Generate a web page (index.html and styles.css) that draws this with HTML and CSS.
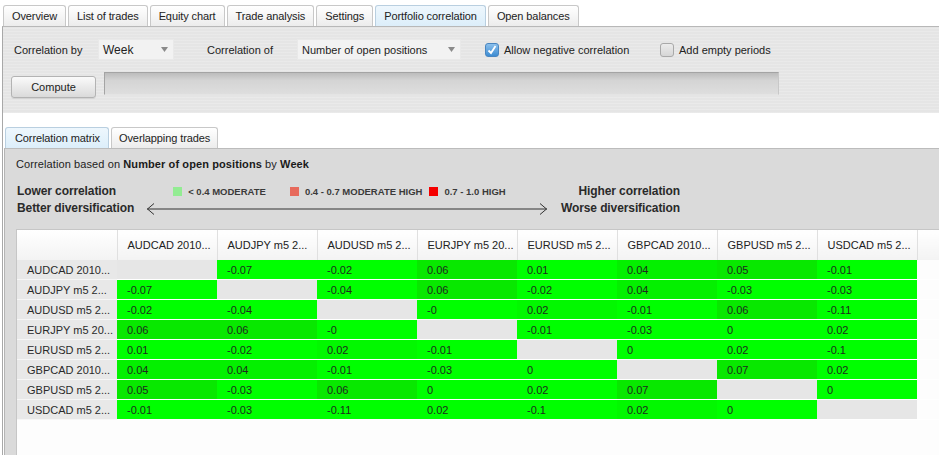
FILE: index.html
```html
<!DOCTYPE html>
<html lang="en">
<head>
  <meta charset="UTF-8">
  <title>Portfolio correlation</title>
  <link rel="stylesheet" href="styles.css">
</head>
<body>
  <div class="tabs">
    <div class="tab">Overview</div>
    <div class="tab">List of trades</div>
    <div class="tab">Equity chart</div>
    <div class="tab">Trade analysis</div>
    <div class="tab">Settings</div>
    <div class="tab active">Portfolio correlation</div>
    <div class="tab">Open balances</div>
  </div>

  <div class="main">
    <div class="settings">
      <div class="row">
        <span class="lbl lbl-by">Correlation by</span>
        <span class="select sel-by">Week <svg class="caret" width="7" height="5" viewBox="0 0 7 5"><path d="M0 0h7L3.5 5z" fill="#8a8a8a"/></svg></span>
        <span class="lbl lbl-of">Correlation of</span>
        <span class="select sel-of">Number of open positions <svg class="caret" width="7" height="5" viewBox="0 0 7 5"><path d="M0 0h7L3.5 5z" fill="#8a8a8a"/></svg></span>
        <span class="check on"><svg width="10" height="10" viewBox="0 0 10 10"><path d="M1.5 5.5l2.5 2.5 4.5-7" fill="none" stroke="#fff" stroke-width="1.8"/></svg></span>
        <span class="lbl lbl-neg">Allow negative correlation</span>
        <span class="check"></span>
        <span class="lbl lbl-empty">Add empty periods</span>
      </div>
      <div class="row row2">
        <button class="btn">Compute</button>
        <div class="progress"></div>
      </div>
    </div>

    <div class="subtabs">
      <div class="tab active sub-first">Correlation matrix</div>
      <div class="tab">Overlapping trades</div>
    </div>

    <div class="sub">
      <div class="caption">Correlation based on <b>Number of open positions</b> by <b>Week</b></div>

      <div class="legend">
        <div class="side">Lower correlation<br>Better diversification</div>
        <div class="mid">
          <div class="keys">
            <span class="key"><i class="sq sq-low"></i>&lt; 0.4 MODERATE</span>
            <span class="key"><i class="sq sq-mid"></i>0.4 - 0.7 MODERATE HIGH</span>
            <span class="key"><i class="sq sq-high"></i>0.7 - 1.0 HIGH</span>
          </div>
          <svg class="arrow" width="402" height="12" viewBox="0 0 402 12">
            <path d="M1 6H401M8 0.5L1.5 6 8 11.5M394 0.5L400.5 6 394 11.5" fill="none" stroke="#333" stroke-width="1"/>
          </svg>
        </div>
        <div class="side right">Higher correlation<br>Worse diversification</div>
      </div>

      <div class="matrix-wrap">
        <table class="matrix">
          <colgroup>
            <col class="c-name"><col><col><col><col><col><col><col><col><col class="c-pad">
          </colgroup>
          <thead>
            <tr>
              <th></th>
              <th>AUDCAD 2010...</th>
              <th>AUDJPY m5 2...</th>
              <th>AUDUSD m5 2...</th>
              <th>EURJPY m5 20...</th>
              <th>EURUSD m5 2...</th>
              <th>GBPCAD 2010...</th>
              <th>GBPUSD m5 2...</th>
              <th>USDCAD m5 2...</th>
              <th></th>
            </tr>
          </thead>
          <tbody>
            <tr>
              <td class="name">AUDCAD 2010...</td>
              <td class="diag"></td><td class="v">-0.07</td><td class="v">-0.02</td><td class="v p2">0.06</td><td class="v">0.01</td><td class="v p1">0.04</td><td class="v p2">0.05</td><td class="v">-0.01</td><td></td>
            </tr>
            <tr>
              <td class="name">AUDJPY m5 2...</td>
              <td class="v">-0.07</td><td class="diag"></td><td class="v">-0.04</td><td class="v p2">0.06</td><td class="v">-0.02</td><td class="v p1">0.04</td><td class="v">-0.03</td><td class="v">-0.03</td><td></td>
            </tr>
            <tr>
              <td class="name">AUDUSD m5 2...</td>
              <td class="v">-0.02</td><td class="v">-0.04</td><td class="diag"></td><td class="v">-0</td><td class="v p0">0.02</td><td class="v">-0.01</td><td class="v p2">0.06</td><td class="v">-0.11</td><td></td>
            </tr>
            <tr>
              <td class="name">EURJPY m5 20...</td>
              <td class="v p2">0.06</td><td class="v p2">0.06</td><td class="v">-0</td><td class="diag"></td><td class="v">-0.01</td><td class="v">-0.03</td><td class="v">0</td><td class="v">0.02</td><td></td>
            </tr>
            <tr>
              <td class="name">EURUSD m5 2...</td>
              <td class="v">0.01</td><td class="v">-0.02</td><td class="v p0">0.02</td><td class="v">-0.01</td><td class="diag"></td><td class="v">0</td><td class="v">0.02</td><td class="v">-0.1</td><td></td>
            </tr>
            <tr>
              <td class="name">GBPCAD 2010...</td>
              <td class="v p1">0.04</td><td class="v p1">0.04</td><td class="v">-0.01</td><td class="v">-0.03</td><td class="v">0</td><td class="diag"></td><td class="v p2">0.07</td><td class="v">0.02</td><td></td>
            </tr>
            <tr>
              <td class="name">GBPUSD m5 2...</td>
              <td class="v p2">0.05</td><td class="v">-0.03</td><td class="v p2">0.06</td><td class="v">0</td><td class="v">0.02</td><td class="v p2">0.07</td><td class="diag"></td><td class="v">0</td><td></td>
            </tr>
            <tr>
              <td class="name">USDCAD m5 2...</td>
              <td class="v">-0.01</td><td class="v">-0.03</td><td class="v">-0.11</td><td class="v">0.02</td><td class="v">-0.1</td><td class="v p0">0.02</td><td class="v">0</td><td class="diag"></td><td></td>
            </tr>
          </tbody>
        </table>
      </div>
    </div>
  </div>
</body>
</html>
```

FILE: styles.css
```css
body {
  margin: 0;
  background: #fff;
  font-family: "Liberation Sans", Arial, sans-serif;
  font-size: 11px;
  color: #222;
  overflow: hidden;
}
.tabs {
  display: flex;
  gap: 2px;
  padding: 5px 0 0 3px;
}
.tab {
  height: 20px;
  line-height: 21px;
  padding: 0 8px;
  border: 1px solid #c8c8c8;
  border-bottom: 0;
  border-radius: 3px 3px 0 0;
  background: linear-gradient(#fff, #ececec);
  color: #222;
  letter-spacing: -0.1px;
}
.tab.active {
  background: linear-gradient(#eef7fd, #dceefa);
  border-color: #b9cfe0;
}
.main {
  margin-left: 2px;
  border-left: 1px solid #a8a8a8;
  border-top: 1px solid #b8b8b8;
}
.settings {
  height: 86px;
  box-sizing: border-box;
  padding: 12px 0 0 8px;
  background: #e5e5e5 repeating-linear-gradient(0deg, rgba(255,255,255,0.18) 0 1px, transparent 1px 3px);
}
.row {
  display: flex;
  align-items: center;
  height: 21px;
  padding-left: 3px;
}
.lbl {
  white-space: nowrap;
}
.lbl-by { width: 84px; }
.lbl-of { width: 90px; margin-left: 33px; }
.lbl-neg { width: 156px; margin-left: 5px; }
.lbl-empty { margin-left: 5px; }
.select {
  display: flex;
  align-items: center;
  justify-content: space-between;
  box-sizing: border-box;
  height: 21px;
  padding: 0 5px 0 4px;
  background: #f2f2f2;
  border: 1px solid #e9e9e9;
  color: #222;
  font-size: 12px;
}
.sel-by { width: 76px; }
.sel-of { width: 164px; font-size: 11px; }
.caret {
  flex: none;
}
.check {
  display: flex;
  align-items: center;
  justify-content: center;
  box-sizing: border-box;
  width: 14px;
  height: 14px;
  border: 1px solid #a9a9a9;
  border-radius: 3px;
  background: linear-gradient(#ececec, #d6d6d6);
}
.check.on {
  margin-left: 24px;
  border-color: #4a86c0;
  background: linear-gradient(#8cc0ec, #3d8cd2);
}
.row2 {
  margin-top: 12px;
  align-items: flex-start;
  height: 26px;
  padding-left: 0;
}
.btn {
  margin-top: 4px;
  width: 85px;
  height: 22px;
  border: 1px solid #b3b3b3;
  border-radius: 3px;
  background: linear-gradient(#fafafa, #dadada);
  box-shadow: 0 1px 0 rgba(0,0,0,0.08);
  font-family: inherit;
  font-size: 11px;
  color: #222;
  padding: 0;
}
.progress {
  margin-left: 8px;
  width: 675px;
  height: 23px;
  box-sizing: border-box;
  border: 1px solid #a4a4a4;
  border-bottom-color: #e4e4e4;
  border-right-color: #c8c8c8;
  background: linear-gradient(#bcbcbc, #d4d4d4 35%, #dedede);
}
.subtabs {
  display: flex;
  gap: 2px;
  margin-top: 14px;
  padding-left: 2px;
}
.subtabs .tab {
  padding: 0 7px;
}
.subtabs .sub-first {
  padding: 0 8px 0 9px;
}
.sub {
  margin-left: 1px;
  border-left: 1px solid #b4b4b4;
  border-top: 1px solid #bcbcbc;
  background: #dadada;
  padding: 8px 0 0 11px;
}
.caption {
  line-height: 14px;
  font-size: 11px;
  letter-spacing: 0.1px;
  color: #222;
}
.caption b {
  color: #1a1a1a;
}
.legend {
  display: flex;
  margin: 12px 0 0 1px;
  width: 663px;
  height: 34px;
}
.side {
  font-weight: bold;
  font-size: 12px;
  line-height: 17px;
  letter-spacing: -0.1px;
  color: #2a2a2a;
  white-space: nowrap;
}
.side.right {
  margin-left: auto;
  text-align: right;
}
.mid {
  margin-left: 12px;
  width: 402px;
  display: flex;
  flex-direction: column;
}
.keys {
  display: flex;
  height: 17px;
  align-items: center;
  padding-left: 27px;
}
.key {
  display: flex;
  align-items: center;
  font-size: 9.5px;
  font-weight: bold;
  color: #3a3a3a;
  margin-right: 24px;
}
.key:nth-child(2) { margin-right: 7px; }
.sq {
  display: inline-block;
  width: 9px;
  height: 9px;
  margin-right: 6px;
}
.sq-low { background: #93ec93; }
.sq-mid { background: #e76a5c; }
.sq-high { background: #f50000; }
.arrow {
  display: block;
  margin-top: 3px;
}
.matrix-wrap {
  margin-top: 12px;
  height: 226px;
  background: #fdfdfd;
  border-top: 1px solid #c6c6c6;
  border-left: 1px solid #c6c6c6;
  overflow: hidden;
}
.matrix {
  table-layout: fixed;
  border-collapse: collapse;
  width: 922px;
}
.matrix col { width: 100px; }
.matrix col.c-pad { width: 22px; }
.matrix th {
  height: 30px;
  padding: 0 0 0 10px;
  text-align: left;
  font-weight: normal;
  white-space: nowrap;
  overflow: hidden;
  background: linear-gradient(#fff, #f3f3f3);
  border-right: 1px solid #e0e0e0;
  color: #222;
}
.matrix td {
  height: 19px;
  padding: 0 0 0 10px;
  border-bottom: 1px solid #fff;
  white-space: nowrap;
  overflow: hidden;
}
.matrix td.name {
  background: #e8e8e8;
  border-bottom-color: #f6f6f6;
  color: #2a2a2a;
}
.matrix td.diag { background: #e6e6e6; }
.matrix td.v { background: #00ff00; color: #1e2a1e; }
.matrix td.v.p0 { background: #02f800; }
.matrix td.v.p1 { background: #04f000; }
.matrix td.v.p2 { background: #08e800; }
```
